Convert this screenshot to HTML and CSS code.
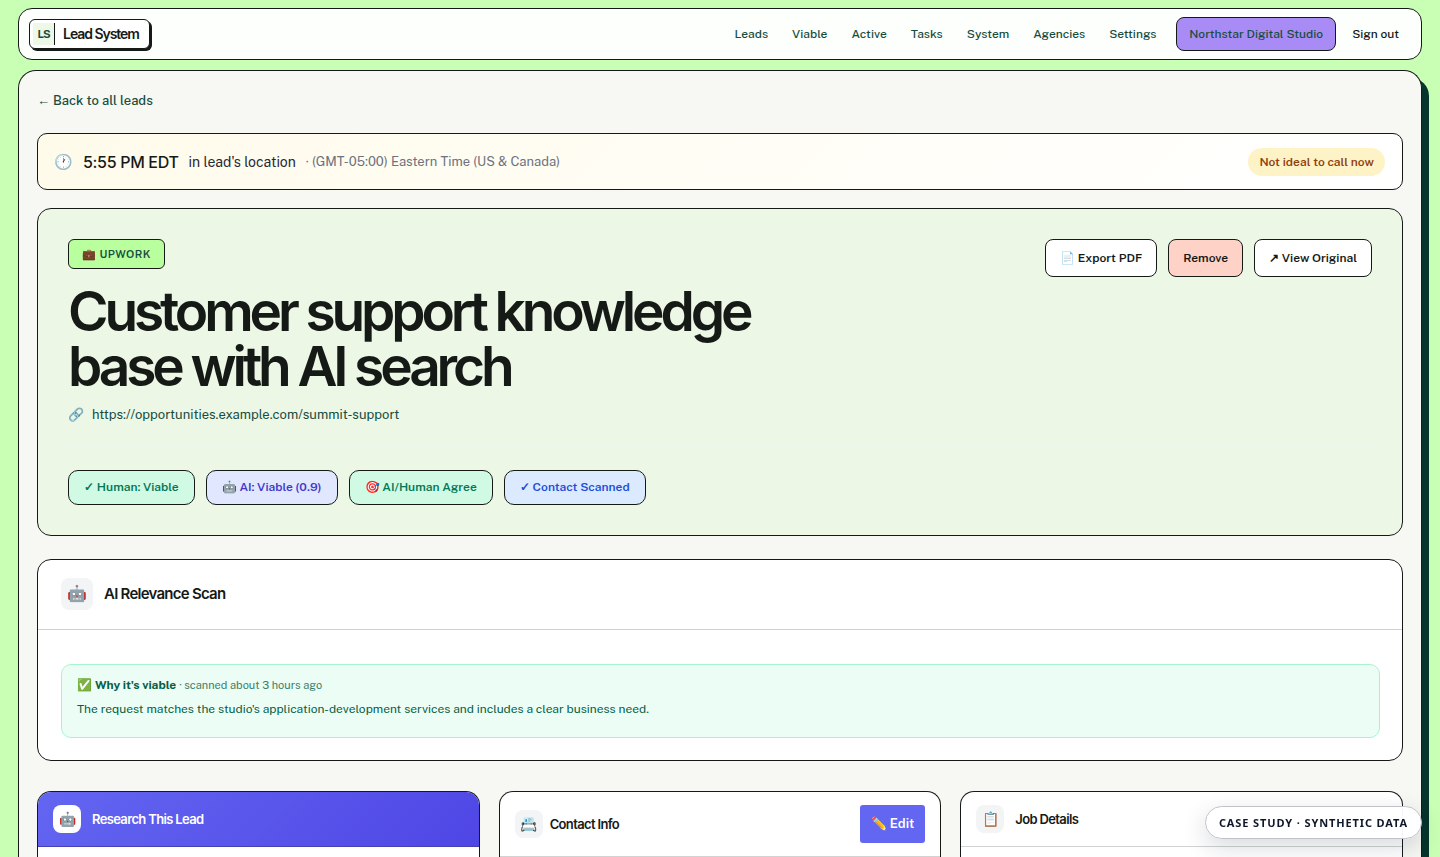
FILE: index.html
```html
<!DOCTYPE html>
<html lang="en">

<head>
    <title>Lead System</title>
    <meta charset="utf-8" />
    <meta name="viewport" content="width=device-width, initial-scale=1">
    <link rel="stylesheet" href="styles.css">
</head>
<body>

    <header class="topbar">
        <a class="brand" href="#">
            <span class="brand-mark">LS</span>
            <span class="brand-name">Lead System</span>
        </a>
        <nav class="menu">
            <a href="#">Leads</a>
            <a href="#">Viable</a>
            <a href="#">Active</a>
            <a href="#">Tasks</a>
            <a href="#">System</a>
            <a href="#">Agencies</a>
            <a href="#">Settings</a>
            <a class="agency" href="#">Northstar Digital Studio</a>
            <button class="signout" type="button">Sign out</button>
        </nav>
    </header>

    <main class="page">
        <a class="back" href="#">← Back to all leads</a>

        <section class="time-bar">
            <span class="clock">🕐</span>
            <strong class="time">5:55 PM EDT</strong>
            <span class="place">in lead's location</span>
            <span class="zone">· (GMT-05:00) Eastern Time (US &amp; Canada)</span>
            <span class="call-state">Not ideal to call now</span>
        </section>

        <section class="hero">
            <div class="hero-top">
                <div class="hero-main">
                    <span class="source">💼 UPWORK</span>
                    <h1>Customer support knowledge base with AI search</h1>
                    <a class="lead-url" href="#"><span>🔗</span>https://opportunities.example.com/summit-support</a>
                </div>
                <div class="actions">
                    <button class="btn" type="button">📄 Export PDF</button>
                    <button class="btn btn-remove" type="button">Remove</button>
                    <a class="btn" href="#">↗ View Original</a>
                </div>
            </div>
            <div class="states">
                <span class="state green">✓ Human: Viable</span>
                <span class="state indigo">🤖 AI: Viable (0.9)</span>
                <span class="state green">🎯 AI/Human Agree</span>
                <span class="state blue">✓ Contact Scanned</span>
            </div>
        </section>

        <section class="card scan">
            <div class="card-head">
                <span class="icon">🤖</span>
                <h2>AI Relevance Scan</h2>
            </div>
            <div class="scan-body">
                <div class="reason">
                    <p class="reason-title">✅ <strong>Why it's viable</strong> <small>· scanned about 3 hours ago</small></p>
                    <p>The request matches the studio's application-development services and includes a clear business need.</p>
                </div>
            </div>
        </section>

        <div class="columns">
            <section class="card">
                <div class="card-head research">
                    <span class="icon">🤖</span>
                    <h2>Research This Lead</h2>
                </div>
            </section>
            <section class="card">
                <div class="card-head contact">
                    <span class="icon">📇</span>
                    <h2>Contact Info</h2>
                    <button class="edit" type="button">✏️ Edit</button>
                </div>
            </section>
            <section class="card">
                <div class="card-head">
                    <span class="icon">📋</span>
                    <h2>Job Details</h2>
                </div>
            </section>
        </div>
    </main>

    <div class="notice">CASE STUDY · SYNTHETIC DATA</div>

</body>
</html>
```
FILE: styles.css
```css
* {
    box-sizing: border-box;
}

body {
    display: flex;
    flex-direction: column;
    gap: 10px;
    height: 100vh;
    margin: 0;
    padding: 8px 18px 0;
    overflow: hidden;
    background: #c8ffb5;
    color: #151a17;
    font-family: "Public Sans", Roboto, sans-serif;
    font-size: 13px;
    line-height: 20px;
}

a {
    color: #174d41;
    text-decoration: none;
}

button {
    font: inherit;
    color: inherit;
    cursor: pointer;
}

h1, h2, p {
    margin: 0;
}

/* top bar */
.topbar {
    display: flex;
    flex-shrink: 0;
    align-items: center;
    justify-content: space-between;
    height: 52px;
    padding: 0 10px;
    background: #fdfffc;
    border: 1px solid #151a17;
    border-radius: 14px;
}

.brand {
    display: flex;
    align-items: center;
    gap: 8px;
    height: 30px;
    padding: 0 10px 0 3px;
    background: #fff;
    border: 1px solid #151a17;
    border-radius: 6px;
    box-shadow: 2px 2px 0 #151a17;
    color: #151a17;
    letter-spacing: -0.08em;
}

.brand-mark {
    width: 22px;
    background: #edf8e7;
    border-right: 1px solid #151a17;
    color: #174d41;
    font-size: 11px;
    font-weight: 700;
    line-height: 22px;
    text-align: center;
}

.brand-name {
    font-family: Inter, sans-serif;
    font-size: 14px;
    font-weight: 600;
}

.menu {
    display: flex;
    align-items: center;
    font-size: 12px;
    font-weight: 500;
}

.menu a {
    padding: 6px 12px;
}

.menu .agency {
    margin: 0 4px 0 8px;
    background: #a98bf5;
    border: 1px solid #151a17;
    border-radius: 8px;
}

.signout {
    padding: 6px 12px;
    background: none;
    border: 0;
}

/* page */
.page {
    display: flex;
    flex: 1 0 auto;
    flex-direction: column;
    padding: 18px 18px 0;
    background: #f7f7f3;
    border: 1px solid #151a17;
    border-bottom: 0;
    border-radius: 18px 18px 0 0;
    box-shadow: 7px 8px 0 #06352d;
}

.back {
    align-self: flex-start;
    margin: 2px 0 22px;
    font-weight: 500;
}

.time-bar {
    display: flex;
    align-items: center;
    gap: 10px;
    height: 57px;
    margin-bottom: 18px;
    padding: 0 17px 0 16px;
    background: linear-gradient(135deg, #fffbeb, #fff);
    border: 1px solid #151a17;
    border-radius: 10px;
}

.clock {
    font-size: 15px;
}

.time {
    font-family: Inter, sans-serif;
    font-size: 16px;
    font-weight: 500;
    letter-spacing: -0.02em;
}

.place {
    color: #1f2937;
    font-size: 14px;
}

.zone {
    color: #6b7280;
}

.call-state {
    margin-left: auto;
    padding: 4px 11px;
    background: #fef3c7;
    border-radius: 14px;
    color: #92400e;
    font-size: 12px;
    font-weight: 600;
}

/* lead header */
.hero {
    margin-bottom: 23px;
    padding: 30px;
    background: #edf7e6;
    border: 1px solid #151a17;
    border-radius: 14px;
}

.hero-top {
    display: flex;
    align-items: flex-start;
    justify-content: space-between;
    padding-bottom: 21px;
    border-bottom: 1px solid #eef5ec;
}

.hero-main {
    max-width: 760px;
}

.source {
    display: inline-block;
    padding: 4px 13px;
    background: #b9ff9d;
    border: 1px solid #151a17;
    border-radius: 6px;
    color: #174d41;
    font-size: 11px;
    font-weight: 600;
    letter-spacing: 0.04em;
}

h1 {
    margin: 15px 0 11px;
    font-family: Inter, sans-serif;
    font-size: 55px;
    font-weight: 600;
    letter-spacing: -0.075em;
    line-height: 55px;
}

.lead-url {
    display: flex;
    gap: 8px;
}

.actions {
    display: flex;
    gap: 11px;
}

.btn {
    padding: 8px 14px;
    background: #fff;
    border: 1px solid #151a17;
    border-radius: 8px;
    color: #151a17;
    font-size: 12px;
    font-weight: 600;
}

.btn-remove {
    background: #ffd2c7;
}

.states {
    display: flex;
    gap: 11px;
    padding-top: 23px;
}

.state {
    padding: 7px 15px;
    border: 1px solid #151a17;
    border-radius: 10px;
    font-size: 12px;
    font-weight: 600;
    line-height: 19px;
}

.green {
    background: #d1fae5;
    color: #047857;
}

.indigo {
    background: #e0e7ff;
    color: #4338ca;
}

.blue {
    background: #dbeafe;
    color: #1d4ed8;
}

/* cards */
.card {
    overflow: hidden;
    background: #fff;
    border: 1px solid #151a17;
    border-radius: 14px;
}

.card-head {
    display: flex;
    align-items: center;
    gap: 11px;
    padding: 13px 15px;
    border-bottom: 1px solid #d0d3d1;
}

h2 {
    font-family: Inter, sans-serif;
    font-size: 13px;
    font-weight: 600;
    letter-spacing: -0.05em;
}

.icon {
    width: 28px;
    background: #f3f4f6;
    border-radius: 8px;
    font-size: 14px;
    line-height: 28px;
    text-align: center;
}

.scan {
    margin-bottom: 30px;
}

.scan .card-head {
    padding: 18px 23px 19px;
}

.scan .icon {
    width: 32px;
    font-size: 16px;
    line-height: 32px;
}

.scan h2 {
    font-size: 15px;
}

.scan-body {
    padding: 34px 22px 22px 23px;
}

.reason {
    padding: 10px 15px 18px;
    background: #ecfdf5;
    border: 1px solid #a7f3d0;
    border-radius: 10px;
    color: #065f46;
    font-size: 12px;
}

.reason-title {
    margin-bottom: 4px;
}

.reason small {
    font-size: 11px;
    opacity: 0.8;
}

.columns {
    display: grid;
    flex: 1;
    grid-template-columns: repeat(3, 1fr);
    gap: 19px;
}

.columns .card {
    border-bottom: 0;
    border-radius: 14px 14px 0 0;
}

.research {
    background: linear-gradient(135deg, #6366f1, #4f46e5);
    border-color: #4640b4;
    color: #fff;
}

.research .icon {
    background: #fff;
}

.contact {
    gap: 7px;
}

.edit {
    margin-left: auto;
    padding: 9px 11px;
    background: #6366f1;
    border: 0;
    border-radius: 3px;
    color: #fff;
    font-weight: 600;
}

.notice {
    position: fixed;
    right: 18px;
    bottom: 18px;
    padding: 6px 13px;
    background: rgba(255, 255, 255, 0.96);
    border: 1px solid #bfc1cb;
    border-radius: 17px;
    box-shadow: 0 8px 24px rgba(15, 23, 42, 0.16);
    color: #0f172a;
    font-family: "Noto Sans", sans-serif;
    font-size: 11px;
    font-weight: 700;
    letter-spacing: 0.08em;
    line-height: 19px;
}
```
